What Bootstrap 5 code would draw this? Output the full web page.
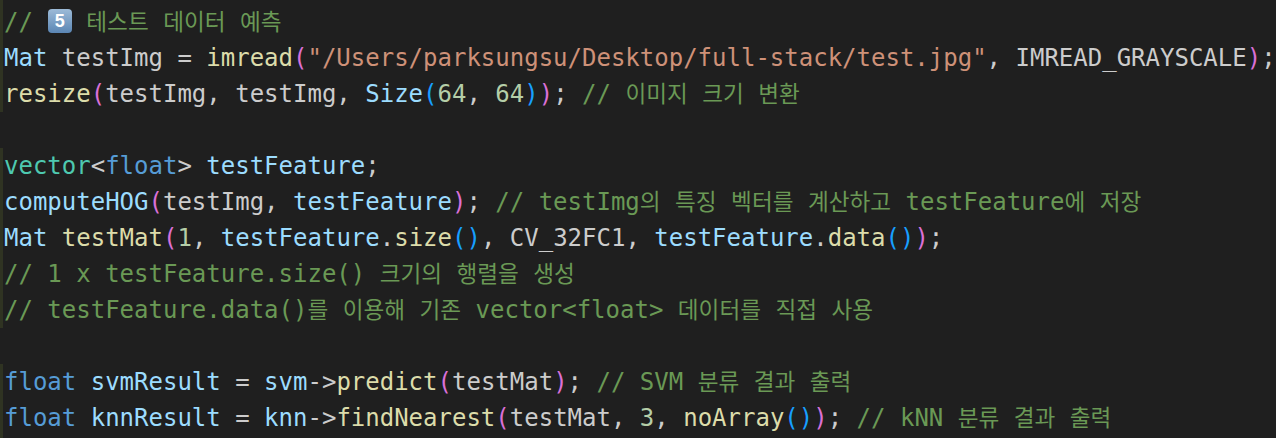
<!DOCTYPE html>
<html lang="ko">
<head>
<meta charset="utf-8">
<title>code</title>
<link href="https://cdn.jsdelivr.net/npm/bootstrap@5.3.0/dist/css/bootstrap.min.css" rel="stylesheet">
<style>
html,body{margin:0;height:100%;background:#1f1f1f;overflow:hidden}
.editor{background:#1f1f1f;height:438px;font-family:"DejaVu Sans Mono","Noto Sans CJK KR",monospace;font-size:24px;line-height:36px;color:#cccccc}
.ln{height:36px;white-space:pre;padding-left:4px}
.ln:first-child{height:40px;padding-top:4px}
.ln:last-child{height:38px}
.mod{box-shadow:inset 3px 0 0 #2f3322}
.c{color:#6a9955}.k{color:#569cd6}.t{color:#4ec9b0}.v{color:#9cdcfe}.f{color:#dcdcaa}.s{color:#ce9178}.n{color:#b5cea8}.p{color:#da70d6}.b{color:#179fff}
.h{font-family:"Noto Sans CJK KR",sans-serif;font-size:22.6px;line-height:1}
.emoji{display:inline-block;width:24px;height:24px;margin-left:.5px;border-radius:4px;background:linear-gradient(#9dbbd8,#5b86b4);color:#fff;font:700 18px/24px "Liberation Sans",sans-serif;text-align:center;vertical-align:3px}
</style>
</head>
<body>
<main class="editor">
<div class="ln mod c">// <span class="emoji">5</span> <span class="h">테스트</span> <span class="h">데이터</span> <span class="h">예측</span></div>
<div class="ln mod"><span class="v">Mat</span> testImg = <span class="f">imread</span><span class="p">(</span><span class="s">"/Users/parksungsu/Desktop/full-stack/test.jpg"</span>, IMREAD_GRAYSCALE<span class="p">)</span>;</div>
<div class="ln mod"><span class="f">resize</span><span class="p">(</span>testImg, testImg, <span class="v">Size</span><span class="b">(</span><span class="n">64</span>, <span class="n">64</span><span class="b">)</span><span class="p">)</span>; <span class="c">// <span class="h">이미지</span> <span class="h">크기</span> <span class="h">변환</span></span></div>
<div class="ln"> </div>
<div class="ln mod"><span class="t">vector</span>&lt;<span class="k">float</span>&gt; <span class="v">testFeature</span>;</div>
<div class="ln mod"><span class="v">computeHOG</span><span class="p">(</span>testImg, <span class="v">testFeature</span><span class="p">)</span>; <span class="c">// testImg<span class="h">의</span> <span class="h">특징</span> <span class="h">벡터를</span> <span class="h">계산하고</span> testFeature<span class="h">에</span> <span class="h">저장</span></span></div>
<div class="ln mod"><span class="v">Mat</span> <span class="f">testMat</span><span class="p">(</span><span class="n">1</span>, <span class="v">testFeature</span>.<span class="f">size</span><span class="b">()</span>, CV_32FC1, <span class="v">testFeature</span>.<span class="f">data</span><span class="b">()</span><span class="p">)</span>;</div>
<div class="ln mod c">// 1 x testFeature.size() <span class="h">크기의</span> <span class="h">행렬을</span> <span class="h">생성</span></div>
<div class="ln mod c">// testFeature.data()<span class="h">를</span> <span class="h">이용해</span> <span class="h">기존</span> vector&lt;float&gt; <span class="h">데이터를</span> <span class="h">직접</span> <span class="h">사용</span></div>
<div class="ln"> </div>
<div class="ln mod"><span class="k">float</span> <span class="v">svmResult</span> = <span class="v">svm</span>-&gt;<span class="f">predict</span><span class="p">(</span>testMat<span class="p">)</span>; <span class="c">// SVM <span class="h">분류</span> <span class="h">결과</span> <span class="h">출력</span></span></div>
<div class="ln mod"><span class="k">float</span> <span class="v">knnResult</span> = <span class="v">knn</span>-&gt;<span class="f">findNearest</span><span class="p">(</span>testMat, <span class="n">3</span>, <span class="f">noArray</span><span class="b">()</span><span class="p">)</span>; <span class="c">// kNN <span class="h">분류</span> <span class="h">결과</span> <span class="h">출력</span></span></div>
</main>
<script src="https://cdn.jsdelivr.net/npm/bootstrap@5.3.0/dist/js/bootstrap.bundle.min.js"></script>
</body>
</html>
